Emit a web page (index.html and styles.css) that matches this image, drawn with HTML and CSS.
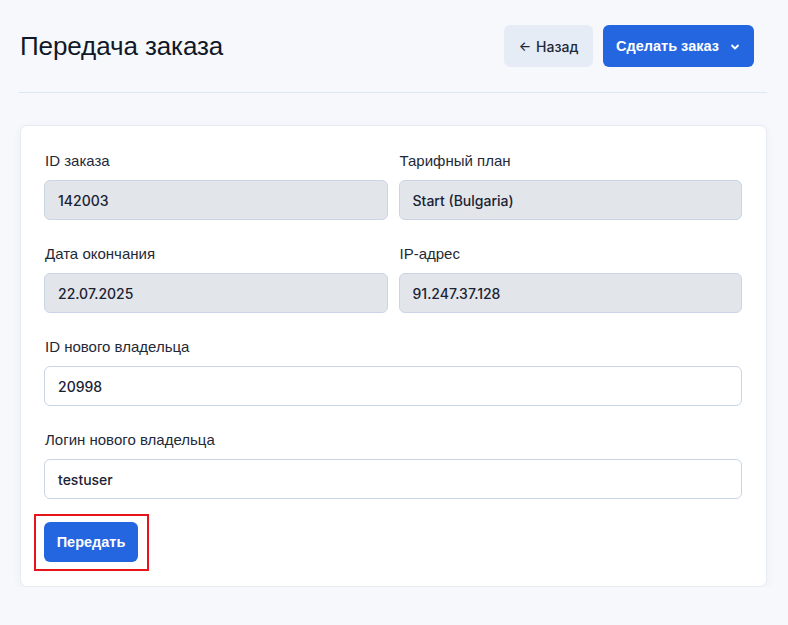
FILE: index.html
```html
<!DOCTYPE html>
<html lang="ru">
<head>
<meta charset="utf-8">
<title>Передача заказа</title>
<link rel="stylesheet" href="styles.css">
</head>
<body>
<div class="page">
  <header class="header">
    <h1 class="title">Передача заказа</h1>
    <div class="actions">
      <button class="btn btn-light" type="button"><span class="arrow">←</span> Назад</button>
      <button class="btn btn-primary btn-order" type="button">Сделать заказ
        <svg class="chev" width="12" height="12" viewBox="0 0 12 12" fill="none"><path d="M3 4.5L6 7.5L9 4.5" stroke="#fff" stroke-width="1.8" stroke-linecap="round" stroke-linejoin="round"/></svg>
      </button>
    </div>
  </header>
  <main class="card">
    <div class="grid">
      <div class="field">
        <label class="label">ID заказа</label>
        <div class="input input-disabled">142003</div>
      </div>
      <div class="field">
        <label class="label">Тарифный план</label>
        <div class="input input-disabled">Start (Bulgaria)</div>
      </div>
      <div class="field">
        <label class="label">Дата окончания</label>
        <div class="input input-disabled">22.07.2025</div>
      </div>
      <div class="field">
        <label class="label">IP-адрес</label>
        <div class="input input-disabled">91.247.37.128</div>
      </div>
      <div class="field full">
        <label class="label">ID нового владельца</label>
        <div class="input">20998</div>
      </div>
      <div class="field full">
        <label class="label">Логин нового владельца</label>
        <div class="input">testuser</div>
      </div>
      <div class="field full">
        <span class="highlight"><button class="btn btn-primary btn-submit" type="button">Передать</button></span>
      </div>
    </div>
  </main>
</div>
</body>
</html>
```

FILE: styles.css
```css
* { box-sizing: border-box; }
html, body { margin: 0; padding: 0; }
body {
  background: #f7f8fc;
  font-family: "Liberation Sans", Arial, sans-serif;
  color: #0f172a;
}
.page {
  padding: 25px 21px 0 19px;
}
.header {
  display: flex;
  align-items: center;
  justify-content: space-between;
  padding: 0 13px 25px 1px;
  border-bottom: 1px solid #dce6f4;
}
.title {
  margin: 0;
  font-size: 26px;
  font-weight: 400;
  line-height: 42px;
  color: #111827;
  letter-spacing: -0.1px;
}
.actions {
  display: flex;
  gap: 10px;
}
.btn {
  border: none;
  border-radius: 6px;
  height: 42px;
  padding: 0 12px;
  font-family: "Inter", "Liberation Sans", sans-serif;
  font-size: 14px;
  font-weight: 500;
  display: inline-flex;
  align-items: center;
  gap: 4px;
  white-space: nowrap;
  cursor: pointer;
}
.btn-light {
  background: #e6ecf6;
  color: #1f2937;
  width: 89px;
  justify-content: center;
}
.arrow { font-size: 13px; margin-right: 1px; }
.btn-primary {
  background: #2465e0;
  color: #fff;
  font-family: "Liberation Sans", Arial, sans-serif;
  font-weight: 700;
  font-size: 14.5px;
}
.btn-order {
  width: 151px;
  justify-content: center;
  gap: 10px;
}
.chev { margin-top: 1px; }
.card {
  margin: 32px 0 0 1px;
  background: #fff;
  border: 1px solid #e6eaf1;
  border-radius: 7px;
  box-shadow: 0 2px 10px rgba(30, 50, 90, 0.05);
  padding: 23px 24px 24px 23px;
}
.grid {
  display: grid;
  grid-template-columns: 1fr 1fr;
  column-gap: 11px;
  row-gap: 22px;
}
.field { display: flex; flex-direction: column; align-items: stretch; }
.full { grid-column: 1 / -1; }
.label {
  font-size: 15px;
  line-height: 20px;
  padding-top: 2px;
  margin: 0 0 9px 1px;
  color: #1f2937;
}
.input {
  height: 40px;
  border: 1px solid #c9d5e6;
  border-radius: 6px;
  padding: 0 13px;
  display: flex;
  align-items: center;
  font-family: "Inter", "Liberation Sans", sans-serif;
  font-size: 14px;
  font-weight: 500;
  color: #1a2233;
  background: #fff;
}
.input-disabled {
  background: #e2e6eb;
}
.highlight {
  align-self: flex-start;
  display: inline-flex;
  border: 2px solid #e8141b;
  padding: 6px 9px 7px 8px;
  margin: -7px 0 -9px -10px;
}
.btn-submit {
  height: 40px;
  width: 94px;
  justify-content: center;
}
```
